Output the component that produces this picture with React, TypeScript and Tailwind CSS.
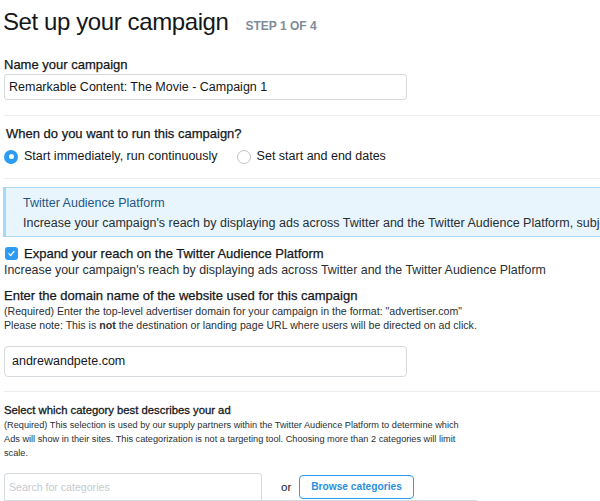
import React from "react";

function Radio({ checked }: { checked: boolean }) {
  return checked ? (
    <span className="flex h-[14px] w-[14px] shrink-0 items-center justify-center rounded-full bg-[#2b9bf4]">
      <span className="h-[5px] w-[5px] rounded-full bg-white" />
    </span>
  ) : (
    <span className="block h-[14px] w-[14px] shrink-0 rounded-full border border-[#bcc3c9] bg-white" />
  );
}

export default function App() {
  return (
    <div className="h-[501px] w-[600px] overflow-hidden bg-white font-['Liberation_Sans',Arial,sans-serif] text-[#14171a]">
      <div className="flex items-baseline pl-[3px] pt-[8px]">
        <h1 className="text-[24px] leading-[28px] tracking-[-0.4px] text-[#14171a]">Set up your campaign</h1>
        <span className="ml-[17px] text-[12px] font-bold text-[#7f8b97]">STEP 1 OF 4</span>
      </div>

      <div className="pl-[4px]">
        <div className="mt-[21px] text-[13px] leading-[15px] [-webkit-text-stroke:0.25px]">Name your campaign</div>
        <div className="mt-[2px] flex h-[26px] w-[403px] items-center rounded-[3px] border border-[#d5dade] pl-[4px] text-[12.5px] text-[#14171a]">
          Remarkable Content: The Movie - Campaign 1
        </div>

        <div className="mt-[15px] h-px bg-[#ebedef]" />

        <div className="mt-[10px] pl-[2px] text-[13px] leading-[15px] [-webkit-text-stroke:0.25px]">When do you want to run this campaign?</div>
        <div className="mt-[8px] flex items-center text-[12.5px] leading-[15px]">
          <Radio checked />
          <span className="ml-[6px]">Start immediately, run continuously</span>
          <span className="ml-[19px]">
            <Radio checked={false} />
          </span>
          <span className="ml-[6px]">Set start and end dates</span>
        </div>

        <div className="mt-[14px] h-px bg-[#ebedef]" />
      </div>

      <div className="ml-[3px] mt-[8px] w-[700px] whitespace-nowrap border-y border-l-[3px] border-[#a9d7f7] bg-[#e8f5fd] pb-[3px] pl-[17px] pt-[5px] text-[12.5px] leading-[20px]">
        <div className="text-[#1f5684]">Twitter Audience Platform</div>
        <div className="text-[#292f33]">
          Increase your campaign's reach by displaying ads across Twitter and the Twitter Audience Platform, subject to our policies.
        </div>
      </div>

      <div className="pl-[4px]">
        <div className="mt-[9px] flex items-center text-[13px] leading-[15px]">
          <span className="ml-[1px] flex h-[13px] w-[13px] items-center justify-center rounded-[3px] bg-[#2b9bf4]">
            <svg width="9" height="9" viewBox="0 0 9 9">
              <path d="M2 4.8 L3.7 6.6 L7 2.4" fill="none" stroke="white" strokeWidth="1.3" strokeLinecap="round" strokeLinejoin="round" />
            </svg>
          </span>
          <span className="ml-[6px] [-webkit-text-stroke:0.25px]">Expand your reach on the Twitter Audience Platform</span>
        </div>
        <div className="mt-[2px] text-[12.4px] leading-[15px] text-[#292f33]">
          Increase your campaign's reach by displaying ads across Twitter and the Twitter Audience Platform
        </div>

        <div className="mt-[10px] text-[13px] leading-[15px] [-webkit-text-stroke:0.25px]">Enter the domain name of the website used for this campaign</div>
        <div className="mt-[1px] text-[10.6px] leading-[14px] text-[#292f33]">
          (Required) Enter the top-level advertiser domain for your campaign in the format: "advertiser.com"
        </div>
        <div className="text-[10.6px] leading-[14px] text-[#292f33]">
          Please note: This is <span className="font-bold">not</span> the destination or landing page URL where users will be directed on ad click.
        </div>

        <div className="mt-[14px] flex h-[31px] w-[403px] items-center rounded-[4px] border border-[#d5dade] pl-[7px] text-[12.5px]">
          andrewandpete.com
        </div>

        <div className="mt-[14px] h-px bg-[#ebedef]" />

        <div className="mt-[11px] text-[11.3px] leading-[14px] [-webkit-text-stroke:0.3px]">Select which category best describes your ad</div>
        <div className="mt-[1px] whitespace-nowrap text-[9.2px] leading-[14px] text-[#292f33]">
          (Required) This selection is used by our supply partners within the Twitter Audience Platform to determine which
          <br />
          Ads will show in their sites. This categorization is not a targeting tool. Choosing more than 2 categories will limit
          <br />
          scale.
        </div>

        <div className="relative mt-[13px] flex items-start">
          <div className="flex h-[30px] w-[258px] items-center rounded-[3px] border border-[#d5dade] pl-[4px] text-[10.6px] text-[#c3cad1]">
            Search for categories
          </div>
          <span className="ml-[19px] mt-[7px] text-[11.5px] leading-[14px] text-[#14171a]">or</span>
          <span className="ml-[8px] mt-[2px] flex h-[24px] items-center rounded-[4px] border border-[#2b9bf4] px-[11px] text-[10.2px] font-bold text-[#2b8fe0]">
            Browse categories
          </span>
          <div className="absolute left-[1px] top-[27px] h-[10px] w-[472px] border-t border-[#d5dade] bg-white" />
        </div>
      </div>
    </div>
  );
}
